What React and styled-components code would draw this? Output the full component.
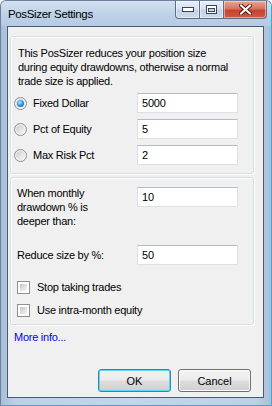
import React from 'react';
import styled, { createGlobalStyle } from 'styled-components';

const GlobalStyle = createGlobalStyle`
  html, body {
    margin: 0;
    padding: 0;
    background: #ffffff;
  }
  * {
    box-sizing: border-box;
  }
`;

const Window = styled.div`
  width: 272px;
  height: 406px;
  display: flex;
  flex-direction: column;
  padding: 0 7px 7px 6px;
  background: linear-gradient(90deg, #a9bed8 0%, #bdd0e6 6%, #c3d5ea 50%, #bdd0e6 94%, #a9bed8 100%);
  border-top: 1px solid #6d809c;
  border-left: 1px solid #6d809c;
  border-right: 1px solid #2aaee6;
  border-bottom: 1px solid #2aaee6;
  border-radius: 6px 6px 0 0;
  font-family: 'Liberation Sans', Arial, sans-serif;
  font-size: 11px;
  color: #000000;
`;

const TitleBar = styled.div`
  height: 25px;
  margin: 0 -7px 0 -6px;
  padding: 0 4px 0 7px;
  display: flex;
  align-items: flex-start;
  justify-content: space-between;
  background: linear-gradient(#d3e1f0, #bcd0e7 60%, #b6cbe3);
  border-radius: 5px 5px 0 0;
`;

const Title = styled.span`
  margin-top: 7px;
  font-size: 11.5px;
  letter-spacing: -0.35px;
  color: #000000;
`;

const Controls = styled.div`
  display: flex;
  height: 18px;
`;

const CaptionButton = styled.div`
  width: ${(p) => p.$w}px;
  height: 18px;
  display: flex;
  align-items: center;
  justify-content: center;
  border: 1px solid #5d6e88;
  border-top: none;
  border-left: ${(p) => (p.$first ? '1px solid #5d6e88' : 'none')};
  border-radius: ${(p) => p.$radius};
  background: ${(p) =>
    p.$close
      ? 'linear-gradient(#e6a693 0%, #d7735f 45%, #c44532 55%, #d0583f 100%)'
      : 'linear-gradient(#e8eff7 0%, #d5e1ee 45%, #c3d3e6 55%, #cad9ea 100%)'};
  box-shadow: inset 0 0 0 1px rgba(255, 255, 255, 0.45);
`;

const Client = styled.div`
  flex: 1;
  display: flex;
  flex-direction: column;
  background: #f0f0f0;
  border: 1px solid #4a5b74;
`;

const GroupBox = styled.div`
  margin: ${(p) => p.$top}px 9px 0 2px;
  padding: ${(p) => p.$pad};
  border: 1px solid #d5dfe5;
  border-radius: 3px;
  box-shadow: inset 1px 1px 0 #ffffff, 1px 1px 0 #ffffff;
  display: flex;
  flex-direction: column;
`;

const Text = styled.div`
  margin-left: ${(p) => p.$left || 0}px;
  line-height: 14px;
  letter-spacing: -0.25px;
`;

const Rows = styled.div`
  display: flex;
  flex-direction: column;
  gap: ${(p) => p.$gap}px;
  margin-top: ${(p) => p.$top}px;
`;

const FieldRow = styled.div`
  display: grid;
  grid-template-columns: 123px 101px;
  align-items: ${(p) => p.$align || 'center'};
  margin-top: ${(p) => p.$top || 0}px;
`;

const RadioLabel = styled.label`
  display: flex;
  align-items: center;
  gap: 6px;
  letter-spacing: -0.25px;
`;

const Radio = styled.span`
  position: relative;
  width: 13px;
  height: 13px;
  border-radius: 50%;
  border: 1px solid #8d8f91;
  background: linear-gradient(135deg, #c6c6c6 0%, #e6e6e6 55%, #fbfbfb 100%);
  box-shadow: inset 0 0 0 1px #f4f4f4;

  &::after {
    content: '';
    display: ${(p) => (p.$checked ? 'block' : 'none')};
    position: absolute;
    left: 2px;
    top: 2px;
    width: 7px;
    height: 7px;
    border-radius: 50%;
    background: radial-gradient(circle at 40% 35%, #b9ecff 0%, #3b9be0 45%, #0c4590 100%);
  }
`;

const Input = styled.div`
  height: 20px;
  margin-top: ${(p) => p.$top || 0}px;
  padding: 0 4px;
  display: flex;
  align-items: center;
  background: #ffffff;
  border: 1px solid #dde1e7;
  border-top-color: #b5b9c1;
  letter-spacing: -0.2px;
`;

const CheckRow = styled.label`
  height: 16px;
  margin-left: 3px;
  display: flex;
  align-items: center;
  gap: 7px;
  letter-spacing: -0.25px;
`;

const Checkbox = styled.span`
  width: 13px;
  height: 13px;
  padding: 2px;
  border: 1px solid #8f8f8f;
  background: #ffffff;

  &::after {
    content: '';
    display: block;
    width: 100%;
    height: 100%;
    background: linear-gradient(135deg, #c4c4c4 0%, #e3e3e3 60%, #f6f6f6 100%);
  }
`;

const Link = styled.a`
  margin: 5px 0 0 6px;
  line-height: 14px;
  color: #0000ff;
  text-decoration: none;
  letter-spacing: -0.25px;
`;

const ButtonBar = styled.div`
  display: flex;
  justify-content: flex-end;
  gap: 7px;
  margin-top: 25px;
  padding-right: 12px;
`;

const Button = styled.button`
  width: 73px;
  height: 23px;
  padding: 0;
  font-family: 'Liberation Sans', Arial, sans-serif;
  font-size: 11px;
  color: #000000;
  border-radius: 3px;
  border: 1px solid ${(p) => (p.$default ? '#3c7fb1' : '#707070')};
  box-shadow: inset 0 0 0 1px ${(p) => (p.$default ? '#5fd6f6' : '#fbfbfb')};
  background: linear-gradient(#f3f3f3 0%, #ebebeb 48%, #dddddd 52%, #cfcfcf 100%);
`;

const MinimizeIcon = () => (
  <svg width="12" height="5" viewBox="0 0 12 5">
    <rect x="0.5" y="0.5" width="11" height="4" fill="#ffffff" stroke="#3a4559" />
  </svg>
);

const MaximizeIcon = () => (
  <svg width="11" height="9" viewBox="0 0 11 9">
    <rect x="0.5" y="0.5" width="10" height="8" fill="#ffffff" stroke="#3a4559" />
    <rect x="2.5" y="3.5" width="6" height="3" fill="#c9d6e6" stroke="#3a4559" />
  </svg>
);

const CloseIcon = () => (
  <svg width="13" height="11" viewBox="0 0 13 11">
    <path d="M2 1.5 L11 9.5 M11 1.5 L2 9.5" stroke="#5a1f18" strokeWidth="4" strokeLinecap="square" />
    <path d="M2 1.5 L11 9.5 M11 1.5 L2 9.5" stroke="#ffffff" strokeWidth="2" strokeLinecap="square" />
  </svg>
);

const sizingModes = [
  { label: 'Fixed Dollar', value: '5000', checked: true },
  { label: 'Pct of Equity', value: '5' },
  { label: 'Max Risk Pct', value: '2' },
];

const App = () => (
  <>
    <GlobalStyle />
    <Window>
      <TitleBar>
        <Title>PosSizer Settings</Title>
        <Controls>
          <CaptionButton $w={25} $first $radius="0 0 0 4px">
            <MinimizeIcon />
          </CaptionButton>
          <CaptionButton $w={24} $radius="0">
            <MaximizeIcon />
          </CaptionButton>
          <CaptionButton $w={43} $close $radius="0 0 4px 0">
            <CloseIcon />
          </CaptionButton>
        </Controls>
      </TitleBar>
      <Client>
        <GroupBox $top={9} $pad="9px 15px 8px 3px">
          <Text $left={4}>
            This PosSizer reduces your position size
            <br />
            during equity drawdowns, otherwise a normal
            <br />
            trade size is applied.
          </Text>
          <Rows $gap={6} $top={5}>
            {sizingModes.map((mode) => (
              <FieldRow key={mode.label}>
                <RadioLabel>
                  <Radio $checked={mode.checked} />
                  {mode.label}
                </RadioLabel>
                <Input>{mode.value}</Input>
              </FieldRow>
            ))}
          </Rows>
        </GroupBox>
        <GroupBox $top={3} $pad="8px 15px 6px 3px">
          <FieldRow $align="start">
            <Text $left={3}>
              When monthly
              <br />
              drawdown % is
              <br />
              deeper than:
            </Text>
            <Input $top={1}>10</Input>
          </FieldRow>
          <FieldRow $top={17}>
            <Text $left={3}>Reduce size by %:</Text>
            <Input>50</Input>
          </FieldRow>
          <Rows $gap={7} $top={14}>
            <CheckRow>
              <Checkbox />
              Stop taking trades
            </CheckRow>
            <CheckRow>
              <Checkbox />
              Use intra-month equity
            </CheckRow>
          </Rows>
        </GroupBox>
        <Link href="#">More info...</Link>
        <ButtonBar>
          <Button $default>OK</Button>
          <Button>Cancel</Button>
        </ButtonBar>
      </Client>
    </Window>
  </>
);

export default App;
